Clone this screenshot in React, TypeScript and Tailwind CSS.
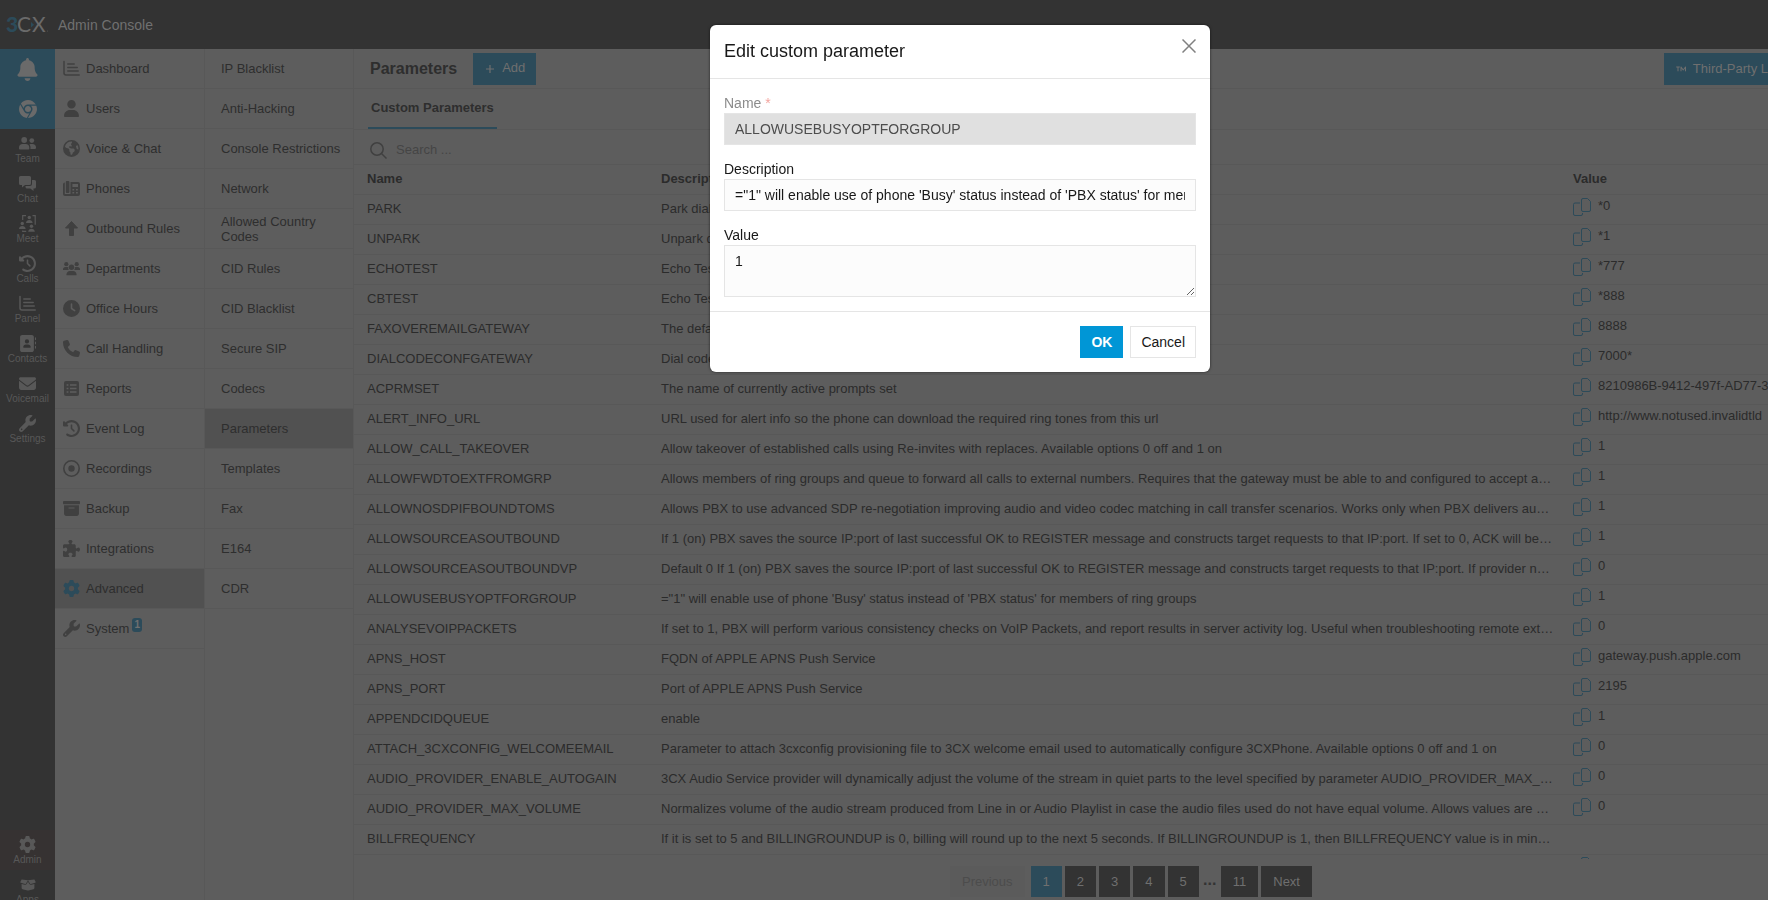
import type { ReactNode } from "react";
import {
  FaAddressBook,
  FaBell,
  FaBoxArchive,
  FaBoxOpen,
  FaChrome,
  FaClock,
  FaClockRotateLeft,
  FaEarthAmericas,
  FaEnvelope,
  FaGear,
  FaPhone,
  FaPuzzlePiece,
  FaRegCircleDot,
  FaTrademark,
  FaUser,
  FaWrench,
} from "react-icons/fa6";

function ChartIcon() {
  return (
    <svg width="17" height="17" viewBox="0 0 17 17" fill="none" stroke="currentColor" strokeWidth="1.5" strokeLinecap="round">
      <path d="M1 1.5v11.5a2 2 0 0 0 2 2h13.2M4.8 4h6.4M4.8 7.5h9.4M4.8 11h10.4" />
    </svg>
  );
}

function OfficePhoneIcon() {
  return (
    <svg width="17" height="17" viewBox="0 0 17 17" fill="currentColor">
      <rect x="2.8" y="1" width="3.6" height="12" rx="1" />
      <path
        fillRule="evenodd"
        d="M0 4.5a2 2 0 0 1 1.8-2V14h5.7V2H15a2 2 0 0 1 2 2v10a2 2 0 0 1-2 2H2a2 2 0 0 1-2-2zM9.4 4v3h5.6V4zM9.4 9v1.6h1.8V9zM13 9v1.6h1.8V9zM9.4 12v1.6h1.8V12zM13 12v1.6h1.8V12z"
      />
    </svg>
  );
}

function UpArrowIcon() {
  return (
    <svg width="17" height="17" viewBox="0 0 17 17" fill="currentColor" stroke="currentColor" strokeLinejoin="round">
      <path d="M8.5 1.5 14.5 8H10.5v7.5h-4V8H2.5z" />
    </svg>
  );
}

function ReportIcon() {
  return (
    <svg width="17" height="17" viewBox="0 0 17 17">
      <rect x="1" y="1" width="15" height="15" rx="2" fill="currentColor" />
      <path d="M3.6 5h1.8M3.6 8.5h1.8M3.6 12h1.8M7 5h6.5M7 8.5h6.5M7 12h6.5" stroke="#5d5d5d" strokeWidth="1.4" />
    </svg>
  );
}

function TeamIcon() {
  return (
    <svg width="17" height="13" viewBox="0 0 17 13" fill="currentColor">
      <circle cx="5.2" cy="3" r="2.9" />
      <path d="M0 10.5C0 8.5 1.5 7 3.5 7h3.3c2 0 3.5 1.5 3.5 3.5v1.2a.8.8 0 0 1-.8.8H.8a.8.8 0 0 1-.8-.8z" />
      <circle cx="12.8" cy="3.6" r="2.4" />
      <path d="M10.5 7.4c.6-.3 1.2-.4 1.8-.4h1.2c2 0 3.5 1.5 3.5 3.5v.6a.8.8 0 0 1-.8.8h-4.8c.3-1.8 0-3.3-.9-4.5z" />
    </svg>
  );
}

function GroupIcon() {
  return (
    <svg width="17" height="14" viewBox="0 0 17 14" fill="currentColor">
      <circle cx="3.3" cy="2.2" r="2.1" />
      <circle cx="13.7" cy="2.2" r="2.1" />
      <circle cx="8.5" cy="5.3" r="2.7" />
      <path d="M3.5 13.3v-1.1c0-1.8 1.5-3.2 3.3-3.2h3.4c1.8 0 3.3 1.4 3.3 3.2v1.1z" />
      <path d="M0 8V7.2C0 6 1 5 2.2 5h2.2l.8.2C5 6.3 5.2 7.2 5.8 8zM17 8V7.2C17 6 16 5 14.8 5h-2.2l-.8.2c.2 1.1 0 2-.6 2.8z" />
    </svg>
  );
}

function ChatIcon() {
  return (
    <svg width="17" height="15" viewBox="0 0 17 15" fill="currentColor">
      <path d="M1.5 0h9A1.5 1.5 0 0 1 12 1.5v6A1.5 1.5 0 0 1 10.5 9H6l-3 2.5V9H1.5A1.5 1.5 0 0 1 0 7.5v-6A1.5 1.5 0 0 1 1.5 0z" />
      <path d="M13 4h2.5A1.5 1.5 0 0 1 17 5.5v5.5a1.5 1.5 0 0 1-1.5 1.5H14.5V15l-3.2-2.5H8A1.5 1.5 0 0 1 6.5 11v-1H10.5A2.5 2.5 0 0 0 13 7.5z" />
    </svg>
  );
}

function MeetIcon() {
  return (
    <svg width="17" height="17" viewBox="0 0 17 17" fill="currentColor">
      <circle cx="10.3" cy="2.5" r="1.7" />
      <path d="M7 8c0-4 6.6-4 6.6 0z" />
      <circle cx="3.3" cy="8.5" r="1.7" />
      <path d="M0 14c0-4 6.6-4 6.6 0z" />
      <circle cx="12.5" cy="11.2" r="1.7" />
      <path d="M9.2 16.7c0-4 6.6-4 6.6 0z" />
      <path d="M7 .7H3.7V5M13.5.7h2.7v9M3.7 15.5v.8h3.5" fill="none" stroke="currentColor" strokeWidth="1.2" />
    </svg>
  );
}

function SearchIcon() {
  return (
    <svg width="17" height="17" viewBox="0 0 17 17" fill="none" stroke="currentColor" strokeWidth="1.5">
      <circle cx="7" cy="7" r="6.2" />
      <path d="m11.5 11.5 5 5" />
    </svg>
  );
}

function CopyIcon() {
  return (
    <svg className="shrink-0 text-[#2c4b5a]" width="18" height="18" viewBox="0 0 18 18" fill="none" stroke="currentColor">
      <path d="M10 .5h4.5l3 3V12a1.5 1.5 0 0 1-1.5 1.5h-6A1.5 1.5 0 0 1 8.5 12V2A1.5 1.5 0 0 1 10 .5z" />
      <path d="M7 5H2A1.5 1.5 0 0 0 .5 6.5V16A1.5 1.5 0 0 0 2 17.5h6A1.5 1.5 0 0 0 9.5 16v-1" />
    </svg>
  );
}

function Logo() {
  return (
    <svg className="overflow-visible" width="42" height="18" viewBox="0 0 42 18" fontFamily="Lato, sans-serif" fontSize="21">
      <text x="-1" y="16" fontWeight="900" fill="#2c4b5a">3</text>
      <text x="10" y="16" fill="#6a6a6a">C</text>
      <text x="25" y="16" fill="#6a6a6a">X</text>
      <path d="m24 6 3 2.7-3 2.7z" fill="#2c4b5a" />
      <circle cx="40.5" cy="15" r=".6" fill="#555" />
    </svg>
  );
}

const dockItems: { label: string; icon: ReactNode }[] = [
  { label: "Team", icon: <TeamIcon /> },
  { label: "Chat", icon: <ChatIcon /> },
  { label: "Meet", icon: <MeetIcon /> },
  { label: "Calls", icon: <FaClockRotateLeft size={17} /> },
  { label: "Panel", icon: <ChartIcon /> },
  { label: "Contacts", icon: <FaAddressBook size={17} /> },
  { label: "Voicemail", icon: <FaEnvelope size={17} /> },
  { label: "Settings", icon: <FaWrench size={17} /> },
];

const navItems: { label: string; icon: ReactNode; active?: boolean; badge?: string }[] = [
  { label: "Dashboard", icon: <ChartIcon /> },
  { label: "Users", icon: <FaUser size={17} /> },
  { label: "Voice & Chat", icon: <FaEarthAmericas size={17} /> },
  { label: "Phones", icon: <OfficePhoneIcon /> },
  { label: "Outbound Rules", icon: <UpArrowIcon /> },
  { label: "Departments", icon: <GroupIcon /> },
  { label: "Office Hours", icon: <FaClock size={17} /> },
  { label: "Call Handling", icon: <FaPhone size={17} /> },
  { label: "Reports", icon: <ReportIcon /> },
  { label: "Event Log", icon: <FaClockRotateLeft size={17} /> },
  { label: "Recordings", icon: <FaRegCircleDot size={17} /> },
  { label: "Backup", icon: <FaBoxArchive size={17} /> },
  { label: "Integrations", icon: <FaPuzzlePiece size={17} /> },
  { label: "Advanced", icon: <FaGear size={17} />, active: true },
  { label: "System", icon: <FaWrench size={17} />, badge: "1" },
];

const subItems = [
  "IP Blacklist",
  "Anti-Hacking",
  "Console Restrictions",
  "Network",
  "Allowed Country Codes",
  "CID Rules",
  "CID Blacklist",
  "Secure SIP",
  "Codecs",
  "Parameters",
  "Templates",
  "Fax",
  "E164",
  "CDR",
];

const parameters = [
  { name: "PARK", description: "Park dial code", value: "*0" },
  { name: "UNPARK", description: "Unpark dial code", value: "*1" },
  { name: "ECHOTEST", description: "Echo Test", value: "*777" },
  { name: "CBTEST", description: "Echo Test", value: "*888" },
  { name: "FAXOVEREMAILGATEWAY", description: "The default fax gateway", value: "8888" },
  { name: "DIALCODECONFGATEWAY", description: "Dial code", value: "7000*" },
  { name: "ACPRMSET", description: "The name of currently active prompts set", value: "8210986B-9412-497f-AD77-3" },
  { name: "ALERT_INFO_URL", description: "URL used for alert info so the phone can download the required ring tones from this url", value: "http://www.notused.invalidtld" },
  { name: "ALLOW_CALL_TAKEOVER", description: "Allow takeover of established calls using Re-invites with replaces. Available options 0 off and 1 on", value: "1" },
  { name: "ALLOWFWDTOEXTFROMGRP", description: "Allows members of ring groups and queue to forward all calls to external numbers. Requires that the gateway must be able to and configured to accept and route calls", value: "1" },
  { name: "ALLOWNOSDPIFBOUNDTOMS", description: "Allows PBX to use advanced SDP re-negotiation improving audio and video codec matching in call transfer scenarios. Works only when PBX delivers audio for the call", value: "1" },
  { name: "ALLOWSOURCEASOUTBOUND", description: "If 1 (on) PBX saves the source IP:port of last successful OK to REGISTER message and constructs target requests to that IP:port. If set to 0, ACK will be sent", value: "1" },
  { name: "ALLOWSOURCEASOUTBOUNDVP", description: "Default 0 If 1 (on) PBX saves the source IP:port of last successful OK to REGISTER message and constructs target requests to that IP:port. If provider needs it", value: "0" },
  { name: "ALLOWUSEBUSYOPTFORGROUP", description: "=\"1\" will enable use of phone 'Busy' status instead of 'PBX status' for members of ring groups", value: "1" },
  { name: "ANALYSEVOIPPACKETS", description: "If set to 1, PBX will perform various consistency checks on VoIP Packets, and report results in server activity log. Useful when troubleshooting remote extensions", value: "0" },
  { name: "APNS_HOST", description: "FQDN of APPLE APNS Push Service", value: "gateway.push.apple.com" },
  { name: "APNS_PORT", description: "Port of APPLE APNS Push Service", value: "2195" },
  { name: "APPENDCIDQUEUE", description: "enable", value: "1" },
  { name: "ATTACH_3CXCONFIG_WELCOMEEMAIL", description: "Parameter to attach 3cxconfig provisioning file to 3CX welcome email used to automatically configure 3CXPhone. Available options 0 off and 1 on", value: "0" },
  { name: "AUDIO_PROVIDER_ENABLE_AUTOGAIN", description: "3CX Audio Service provider will dynamically adjust the volume of the stream in quiet parts to the level specified by parameter AUDIO_PROVIDER_MAX_VOLUME", value: "0" },
  { name: "AUDIO_PROVIDER_MAX_VOLUME", description: "Normalizes volume of the audio stream produced from Line in or Audio Playlist in case the audio files used do not have equal volume. Allows values are between", value: "0" },
  { name: "BILLFREQUENCY", description: "If it is set to 5 and BILLINGROUNDUP is 0, billing will round up to the next 5 seconds. If BILLINGROUNDUP is 1, then BILLFREQUENCY value is in minutes", value: "" },
];

function DockLink({ label, icon }: { label: string; icon: ReactNode }) {
  return (
    <a href="#" className="flex h-10 shrink-0 flex-col items-center text-[10px] leading-3 text-[#585858]">
      <span className="flex h-6 items-end justify-center pb-px">
        <span className="flex h-[17px] items-center">{icon}</span>
      </span>
      {label}
    </a>
  );
}

function Dock() {
  return (
    <aside className="flex w-[55px] shrink-0 flex-col bg-[#333333]">
      <button aria-label="Notifications" className="flex h-10 shrink-0 items-center justify-center bg-[#2c4b5a] text-[#6a6a6a]">
        <FaBell size={23} />
      </button>
      <button aria-label="Chrome extension" className="flex h-10 shrink-0 items-center justify-center bg-[#2c4b5a] text-[#6a6a6a]">
        <FaChrome size={18} />
      </button>
      {dockItems.map((item) => (
        <DockLink key={item.label} {...item} />
      ))}
      <div className="mt-auto -mb-[10px]">
        <div className="bg-[#363232]">
          <DockLink label="Admin" icon={<FaGear size={17} />} />
        </div>
        <DockLink label="Apps" icon={<FaBoxOpen size={16} />} />
      </div>
    </aside>
  );
}

function ParametersTable() {
  return (
    <table className="w-full table-fixed border-separate border-spacing-0 text-left text-[13px] leading-4 text-[#2b2b2b]">
      <colgroup>
        <col className="w-[294px]" />
        <col />
        <col className="w-[208px]" />
      </colgroup>
      <thead>
        <tr className="h-[30px]">
          <th className="border-b border-[#585858] pt-0 pb-0.5 pl-[13px] font-bold">Name</th>
          <th className="border-b border-[#585858] pt-0 pb-0.5 pl-[13px] font-bold">Description</th>
          <th className="border-b border-[#585858] pt-0 pb-0.5 pl-[13px] font-bold">Value</th>
        </tr>
      </thead>
      <tbody>
        {parameters.map((p) => (
          <tr key={p.name} className="h-[30px]">
            <td className="truncate border-b border-[#585858] pt-0 pb-0.5 pl-[13px]">{p.name}</td>
            <td className="truncate border-b border-[#585858] pt-0 pr-1.5 pb-0.5 pl-[13px]">{p.description}</td>
            <td className="overflow-hidden border-b border-[#585858] py-0 pl-[13px] align-top whitespace-nowrap">
              {p.value && (
                <span className="flex items-start gap-[7px] pt-[3px]">
                  <CopyIcon />
                  <span>{p.value}</span>
                </span>
              )}
            </td>
          </tr>
        ))}
      </tbody>
    </table>
  );
}

const pageButton = "h-[31px] bg-[#333333] text-[#6f6f6f] px-3";

function Pagination() {
  return (
    <nav aria-label="Pages" className="mt-[7px] flex justify-center pl-[140px] text-[13px]">
      <button disabled className="mr-1.5 h-[31px] bg-[#5b5b5b] px-3 text-[#4c4c4c]">
        Previous
      </button>
      <div className="flex gap-[3px]">
        <button className="h-[31px] bg-[#2c4b5a] px-3 text-[#6f6f6f]">1</button>
        {["2", "3", "4", "5"].map((n) => (
          <button key={n} className={pageButton}>{n}</button>
        ))}
        <span className="w-4 text-center text-base leading-7 font-bold text-[#333333]">...</span>
        <button className={pageButton}>11</button>
        <button className={pageButton}>Next</button>
      </div>
    </nav>
  );
}

function EditDialog() {
  return (
    <div className="fixed inset-0 flex items-start justify-center pt-[25px] pl-[152px]">
      <div
        role="dialog"
        aria-modal="true"
        aria-labelledby="dialog-title"
        className="w-full max-w-[500px] rounded-md bg-white text-sm text-[#181818] shadow-[0_0_3px_rgba(0,0,0,0.6)]"
      >
        <div className="flex h-[54px] items-start justify-between border-b border-[#e5e5e5] px-3.5">
          <h2 id="dialog-title" className="pt-3.5 text-lg leading-6">
            Edit custom parameter
          </h2>
          <button aria-label="Close" className="pt-3.5 text-[#808080]">
            <svg width="14" height="14" viewBox="0 0 14 14" stroke="currentColor" strokeWidth="1.5">
              <path d="m.5.5 13 13M13.5.5l-13 13" />
            </svg>
          </button>
        </div>
        <form className="px-3.5 pt-4 pb-3.5">
          <label htmlFor="param-name" className="block pb-0.5 leading-4 text-[#8c8c8c]">
            Name <span className="text-[#f3a59f]">*</span>
          </label>
          <input
            id="param-name"
            disabled
            defaultValue="ALLOWUSEBUSYOPTFORGROUP"
            className="block h-8 w-full border border-[#e5e5e5] bg-[#e0e0e0] px-2.5 text-[#4d4d4d]"
          />
          <label htmlFor="param-description" className="mt-4 block pb-0.5 leading-4">
            Description
          </label>
          <input
            id="param-description"
            defaultValue={"=\"1\" will enable use of phone 'Busy' status instead of 'PBX status' for members of ring groups"}
            className="block h-8 w-full border border-[#e5e5e5] bg-[#fcfcfc] px-2.5"
          />
          <label htmlFor="param-value" className="mt-4 block pb-0.5 leading-4">
            Value
          </label>
          <textarea
            id="param-value"
            defaultValue="1"
            className="block h-[52px] w-full resize-y border border-[#e5e5e5] bg-[#fcfcfc] px-2.5 py-[7px] leading-4"
          />
        </form>
        <div className="flex justify-end gap-[7px] border-t border-[#e5e5e5] p-3.5">
          <button className="h-8 bg-[#0096d6] px-[11px] font-bold text-white">OK</button>
          <button className="h-8 border border-[#e5e5e5] bg-white px-2.5">Cancel</button>
        </div>
      </div>
    </div>
  );
}

export default function App() {
  return (
    <div className="flex h-screen flex-col overflow-hidden bg-[#5d5d5d] font-['Liberation_Sans',Arial,sans-serif] text-[13px] text-[#2e2e2e]">
      <header className="flex h-[49px] shrink-0 items-center gap-[9px] bg-[#333333] pl-[7px] text-sm text-[#707070]">
        <Logo />
        <span>Admin Console</span>
      </header>

      <div className="flex min-h-0 flex-1">
        <Dock />

        <nav aria-label="Main" className="w-[150px] shrink-0 border-r border-[#585858]">
          {navItems.map((item) => (
            <a
              key={item.label}
              href="#"
              className={`flex h-10 items-center gap-1.5 border-b border-[#585858] pl-2 ${item.active ? "bg-[#515151]" : ""}`}
            >
              <span className={item.active ? "text-[#2c4b5a]" : "text-[#404040]"}>{item.icon}</span>
              <span>{item.label}</span>
              {item.badge && (
                <span className="-ml-[3px] mt-[9px] h-3.5 w-2.5 self-start rounded-[3px] bg-[#2c4b5a] text-center text-[10px] leading-3.5 font-bold text-[#707070]">
                  {item.badge}
                </span>
              )}
            </a>
          ))}
        </nav>

        <nav aria-label="Advanced" className="w-[149px] shrink-0 border-r border-[#585858]">
          {subItems.map((label) => (
            <a
              key={label}
              href="#"
              className={`flex h-10 items-center border-b border-[#585858] pr-2 pl-4 leading-[15px] ${label === "Parameters" ? "bg-[#515151]" : ""}`}
            >
              {label}
            </a>
          ))}
        </nav>

        <main className="min-w-0 flex-1 overflow-hidden">
          <div className="flex h-10 items-center border-b border-[#585858] pl-4">
            <h1 className="text-base font-bold">Parameters</h1>
            <button className="ml-4 flex h-8 items-center gap-2 bg-[#2c4b5a] pr-[11px] pl-[13px] text-[#6f6f6f]">
              <svg width="8" height="8" viewBox="0 0 8 8" stroke="currentColor" strokeWidth="1.2">
                <path d="M4 0v8M0 4h8" />
              </svg>
              <span className="pb-0.5">Add</span>
            </button>
            <button className="ml-auto flex h-8 items-center gap-[7px] bg-[#2c4b5a] pl-3 whitespace-nowrap text-[#6f6f6f]">
              <FaTrademark size={10} />
              Third-Party L
            </button>
          </div>
          <div className="flex h-[41px] border-b border-[#585858] pl-[14px]">
            <button className="border-b-2 border-[#2c4b5a] px-[3px] font-bold">Custom Parameters</button>
          </div>
          <label className="flex h-[35px] items-center gap-[9px] border-b border-[#585858] pt-1.5 pl-4 text-[#404040]">
            <SearchIcon />
            <input aria-label="Search" placeholder="Search ..." className="w-60 bg-transparent placeholder:text-[#454545]" />
          </label>
          <ParametersTable />
          <div className="flex h-1 justify-end overflow-hidden pt-0.5 pr-[177px]">
            <CopyIcon />
          </div>
          <Pagination />
        </main>
      </div>

      <EditDialog />
    </div>
  );
}
